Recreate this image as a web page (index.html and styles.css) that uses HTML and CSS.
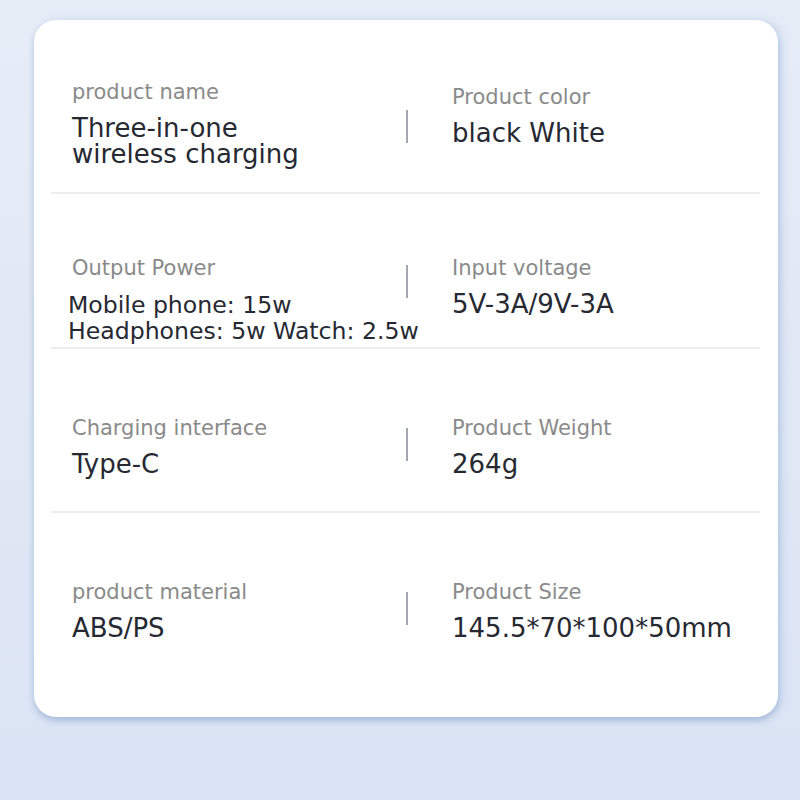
FILE: index.html
```html
<!DOCTYPE html>
<html>
<head>
<meta charset="utf-8">
<link rel="stylesheet" href="styles.css">
</head>
<body>
<div class="page">
  <div class="card">
    <div class="row row-1">
      <div class="cell">
        <div class="label">product name</div>
        <div class="value">Three-in-one<br>wireless charging</div>
      </div>
      <div class="divider"></div>
      <div class="cell cell-right shift">
        <div class="label">Product color</div>
        <div class="value">black White</div>
      </div>
    </div>
    <div class="row row-2">
      <div class="cell">
        <div class="label">Output Power</div>
        <div class="value value-small">Mobile phone: 15w<br>Headphones: 5w Watch: 2.5w</div>
      </div>
      <div class="divider"></div>
      <div class="cell cell-right">
        <div class="label">Input voltage</div>
        <div class="value">5V-3A/9V-3A</div>
      </div>
    </div>
    <div class="row row-3">
      <div class="cell">
        <div class="label">Charging interface</div>
        <div class="value">Type-C</div>
      </div>
      <div class="divider"></div>
      <div class="cell cell-right">
        <div class="label">Product Weight</div>
        <div class="value">264g</div>
      </div>
    </div>
    <div class="row row-4">
      <div class="cell">
        <div class="label">product material</div>
        <div class="value">ABS/PS</div>
      </div>
      <div class="divider"></div>
      <div class="cell cell-right">
        <div class="label">Product Size</div>
        <div class="value">145.5*70*100*50mm</div>
      </div>
    </div>
  </div>
</div>
</body>
</html>
```

FILE: styles.css
```css
html, body {
  margin: 0;
  padding: 0;
}
body {
  width: 800px;
  height: 800px;
  overflow: hidden;
  background: linear-gradient(180deg, #e7edf7 0%, #e0e8f5 50%, #dbe4f4 100%);
  font-family: "DejaVu Sans", "Inter", sans-serif;
}
.page {
  padding: 20px 22px 0 34px;
}
.card {
  width: 744px;
  height: 697px;
  box-sizing: border-box;
  background: #ffffff;
  border-radius: 22px;
  box-shadow: 0 4px 6px rgba(120, 150, 200, 0.45), 4px 0 10px rgba(160, 185, 225, 0.35);
  padding: 0 18px 0 17px;
}
.row {
  display: grid;
  grid-template-columns: 334px 2px 1fr;
  align-items: start;
  padding-left: 21px;
  box-sizing: border-box;
  border-bottom: 2px solid #eeeeee;
}
.row-1 { height: 174px; padding-top: 60px; }
.row-2 { height: 155px; padding-top: 62px; }
.row-3 { height: 164px; padding-top: 67px; }
.row-4 { height: 204px; padding-top: 67px; border-bottom: none; }
.cell {
  min-width: 0;
}
.cell-right {
  padding-left: 44px;
}
.shift {
  margin-top: 5px;
}
.label {
  font-size: 21px;
  line-height: 24px;
  color: #8a8a8a;
}
.value {
  margin-top: 11px;
  font-size: 26px;
  line-height: 26px;
  color: #262932;
}
.value-small {
  margin-top: 12px;
  font-size: 23.6px;
  margin-left: -4px;
  white-space: nowrap;
}
.divider {
  width: 2px;
  height: 33px;
  background: #a3a8b0;
  margin-top: 12px;
}
.row-1 .divider { margin-top: 30px; }
.row-2 .divider { margin-top: 9px; }
```
